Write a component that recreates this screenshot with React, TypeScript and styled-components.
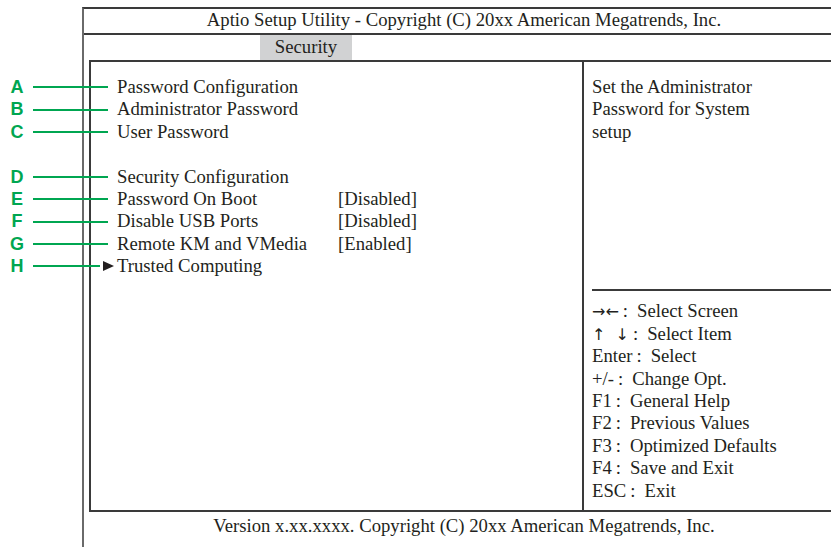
import React from 'react'
import styled, { createGlobalStyle } from 'styled-components'

type Item = {
  label: string
  value?: string
  callout?: string
  submenu?: boolean
  gap?: boolean
}

const ITEMS: Item[] = [
  { label: 'Password Configuration', callout: 'A' },
  { label: 'Administrator Password', callout: 'B' },
  { label: 'User Password', callout: 'C' },
  { label: 'Security Configuration', callout: 'D', gap: true },
  { label: 'Password On Boot', value: '[Disabled]', callout: 'E' },
  { label: 'Disable USB Ports', value: '[Disabled]', callout: 'F' },
  { label: 'Remote KM and VMedia', value: '[Enabled]', callout: 'G' },
  { label: 'Trusted Computing', callout: 'H', submenu: true },
]

// glyph keys get their own font so the arrows come out as wide as in the manual
const KEYS: { key: string; desc: string; glyph?: boolean }[] = [
  { key: '→←', desc: 'Select Screen', glyph: true },
  { key: '↑  ↓', desc: 'Select Item', glyph: true },
  { key: 'Enter', desc: 'Select' },
  { key: '+/-', desc: 'Change Opt.' },
  { key: 'F1', desc: 'General Help' },
  { key: 'F2', desc: 'Previous Values' },
  { key: 'F3', desc: 'Optimized Defaults' },
  { key: 'F4', desc: 'Save and Exit' },
  { key: 'ESC', desc: 'Exit' },
]

const LINE = '22.4px'
const TEXT = '18.7px'
const INK = '#231f20'
const RULE = '#3a3a3a'
const GREEN = '#00a651'

const GlobalStyle = createGlobalStyle`
  html, body {
    margin: 0;
    padding: 0;
    background: #fff;
    overflow: hidden;
  }
  body {
    font-family: "Liberation Serif", "Times New Roman", serif;
    color: ${INK};
  }
`

const Page = styled.div`
  width: 831px;
  height: 547px;
  overflow: hidden;
`

const Frame = styled.div`
  margin: 7px 0 0 82px;
  width: 760px;
  height: 540px;
  border-left: 2px solid #6a6a6a;
  border-top: 2px solid ${RULE};
  display: flex;
  flex-direction: column;
`

const TitleBar = styled.div`
  height: 24px;
  line-height: 22px;
  border-bottom: 2px solid ${RULE};
  text-align: center;
  font-size: ${TEXT};
`

const MenuBar = styled.div`
  height: 25px;
  display: flex;
  padding-left: 176px;
`

const Tab = styled.div<{ $active?: boolean }>`
  width: 92px;
  height: 25px;
  line-height: 23px;
  text-align: center;
  font-size: ${TEXT};
  background: ${(p) => (p.$active ? '#d1d2d3' : 'transparent')};
`

const Panel = styled.div`
  margin-left: 5px;
  width: 746px;
  height: 448px;
  border: 2px solid ${RULE};
  display: flex;
`

const MainPane = styled.div`
  width: 493px;
  border-right: 2px solid ${RULE};
  padding: 14px 0 0 26px;
  box-sizing: border-box;
`

const Row = styled.div<{ $gap?: boolean }>`
  position: relative;
  display: grid;
  grid-template-columns: 221px auto;
  height: ${LINE};
  line-height: ${LINE};
  font-size: ${TEXT};
  margin-top: ${(p) => (p.$gap ? LINE : '0')};
  white-space: nowrap;
`

const SubmenuMark = styled.span`
  position: absolute;
  left: -14px;
  top: 6px;
  width: 0;
  height: 0;
  border-left: 11px solid ${INK};
  border-top: 5.5px solid transparent;
  border-bottom: 5.5px solid transparent;
`

const Callout = styled.div`
  position: absolute;
  left: -107px;
  top: 0;
  height: ${LINE};
  display: flex;
  align-items: center;
  pointer-events: none;
`

const CalloutLetter = styled.span`
  width: 14px;
  font-family: "Liberation Sans", Arial, sans-serif;
  font-size: 18px;
  font-weight: bold;
  color: ${GREEN};
  text-align: center;
`

const CalloutLine = styled.span<{ $short?: boolean }>`
  margin-left: 9px;
  width: ${(p) => (p.$short ? '67px' : '75px')};
  height: 2px;
  background: ${GREEN};
`

const HelpPane = styled.div`
  flex: 1;
  display: flex;
  flex-direction: column;
  padding: 14px 0 8px 8px;
  font-size: ${TEXT};
  line-height: ${LINE};
  white-space: nowrap;
`

const HelpText = styled.div`
  width: 175px;
  white-space: normal;
`

const KeyList = styled.div`
  margin-top: auto;
  border-top: 2px solid ${RULE};
  padding-top: 9px;
`

const KeyRow = styled.div`
  height: ${LINE};
`

const KeyGlyph = styled.span`
  font-family: "DejaVu Sans", sans-serif;
  font-size: 16px;
  white-space: pre;
`

const KeyColon = styled.span`
  margin: 0 9px 0 4px;
`

const Footer = styled.div`
  height: 28px;
  line-height: 28px;
  text-align: center;
  font-size: ${TEXT};
`

export default function App() {
  return (
    <Page>
      <GlobalStyle />
      <Frame>
        <TitleBar>Aptio Setup Utility - Copyright (C) 20xx American Megatrends, Inc.</TitleBar>
        <MenuBar>
          <Tab $active>Security</Tab>
        </MenuBar>
        <Panel>
          <MainPane>
            {ITEMS.map((item) => (
              <Row key={item.label} $gap={item.gap}>
                {item.callout && (
                  <Callout>
                    <CalloutLetter>{item.callout}</CalloutLetter>
                    <CalloutLine $short={item.submenu} />
                  </Callout>
                )}
                {item.submenu && <SubmenuMark />}
                <span>{item.label}</span>
                <span>{item.value}</span>
              </Row>
            ))}
          </MainPane>
          <HelpPane>
            <HelpText>Set the Administrator Password for System setup</HelpText>
            <KeyList>
              {KEYS.map(({ key, desc, glyph }) => (
                <KeyRow key={key}>
                  {glyph ? <KeyGlyph>{key}</KeyGlyph> : key}
                  <KeyColon>:</KeyColon>
                  {desc}
                </KeyRow>
              ))}
            </KeyList>
          </HelpPane>
        </Panel>
        <Footer>Version x.xx.xxxx. Copyright (C) 20xx American Megatrends, Inc.</Footer>
      </Frame>
    </Page>
  )
}
